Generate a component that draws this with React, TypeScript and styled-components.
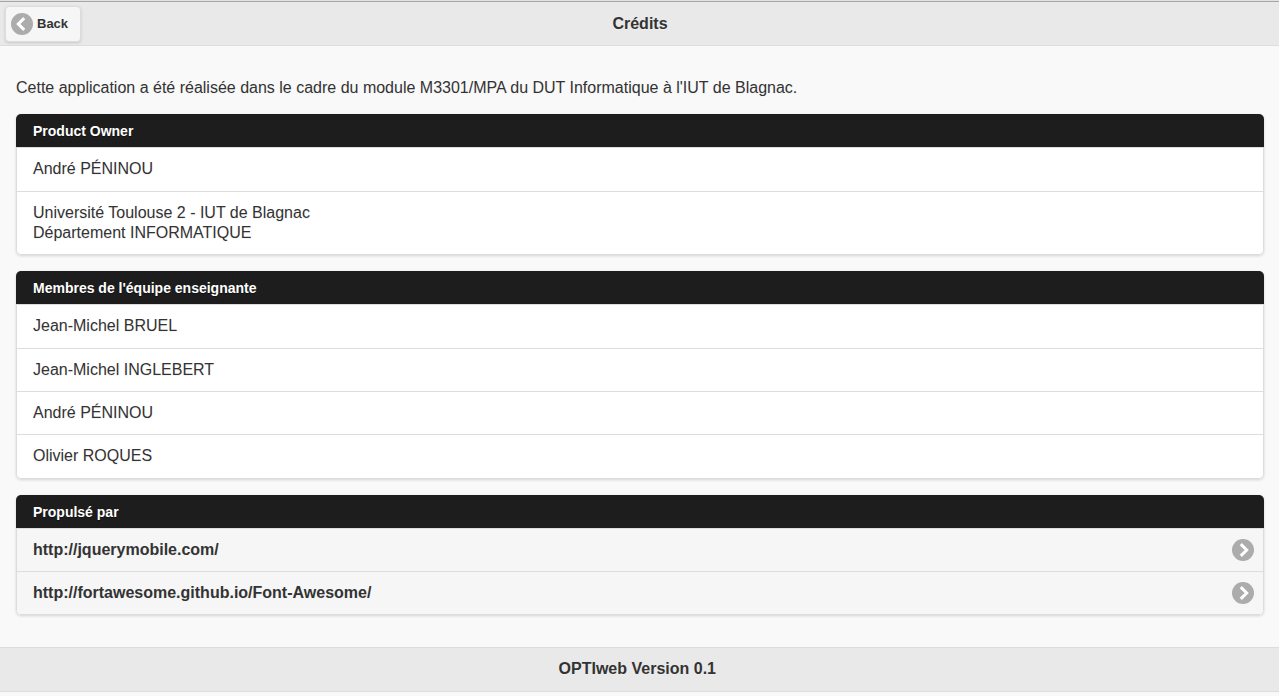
import React from 'react';
import styled, { createGlobalStyle, css } from 'styled-components';

const GlobalStyle = createGlobalStyle`
  *, *::before, *::after { box-sizing: border-box; }
  body {
    margin: 0;
    background: #f9f9f9;
    color: #333;
    font: 16px/20px "Liberation Sans", Arial, Helvetica, sans-serif;
    text-shadow: 0 1px 0 #f3f3f3;
  }
`;

const bar = css`
  background: #e9e9e9;
  border: 1px solid #ddd;
  border-width: 1px 0;
  text-shadow: 0 1px 0 #eee;
`;

const Header = styled.header`
  ${bar}
  display: grid;
  grid-template-columns: 1fr auto 1fr;
  align-items: center;
  height: 46px;
  padding: 2px 4px 0 5px;
  border-top-color: #e2e2e2;
  box-shadow: inset 0 1px 0 #a6a6a6;
`;

const Title = styled.h1`
  margin: 0;
  font-size: 16px;
  line-height: 20px;
`;

const BackButton = styled.button`
  justify-self: start;
  display: flex;
  align-items: center;
  gap: 4px;
  height: 36px;
  padding: 0 12px 0 5px;
  border: 1px solid #ddd;
  border-radius: 4px;
  background: #f6f6f6;
  color: #333;
  font: bold 13px/16px "Liberation Sans", Arial, Helvetica, sans-serif;
  text-shadow: 0 1px 0 #f3f3f3;
  box-shadow: 0 1px 3px rgba(0, 0, 0, 0.15);
  cursor: pointer;
`;

const Main = styled.main`
  padding: 16px 15px 16px 16px;
`;

const Intro = styled.p`
  margin: 16px 0;
`;

const Card = styled.section`
  margin: 16px 0;
  border-radius: 5px;
  box-shadow: 0 1px 3px rgba(0, 0, 0, 0.15);
`;

const CardTitle = styled.h2`
  margin: 0;
  padding: 9px 17px 8px;
  border-radius: 5px 5px 0 0;
  background: #1d1d1d;
  color: #fff;
  font-size: 14px;
  line-height: 16px;
  text-shadow: 0 1px 0 #111;
`;

const List = styled.ul`
  margin: 0;
  padding: 0;
  list-style: none;
  overflow: hidden;
  border: 1px solid #ddd;
  border-top: 0;
  border-radius: 0 0 5px 5px;
  background: #fff;
`;

const Row = styled.li<{ $roomy?: boolean }>`
  padding: 11px 16px ${({ $roomy }) => ($roomy ? 12 : 11)}px;
  border-top: 1px solid #ddd;
`;

const LinkRow = styled.li`
  border-top: 1px solid #ddd;
`;

const RowLink = styled.a`
  display: flex;
  align-items: center;
  justify-content: space-between;
  height: 42px;
  padding: 0 9px 0 16px;
  background: #f6f6f6;
  color: #333;
  font-weight: bold;
  text-decoration: none;
`;

const Footer = styled.footer`
  ${bar}
  padding: 11px 0 12px;
  text-align: center;
  font-weight: bold;
`;

const Disc = styled.svg`
  flex: none;
  width: 22px;
  height: 22px;
`;

const Carat = ({ left = false }: { left?: boolean }) => (
  <Disc viewBox="0 0 22 22" aria-hidden="true">
    <circle cx="11" cy="11" r="11" fill="#000" fillOpacity="0.3" />
    <path
      d={left ? 'M13.2 5.1 7.3 11 13.2 16.9' : 'M8.8 5.1 14.7 11 8.8 16.9'}
      fill="none"
      stroke="#fff"
      strokeWidth="3"
    />
  </Disc>
);

const members = ['Jean-Michel BRUEL', 'Jean-Michel INGLEBERT', 'André PÉNINOU', 'Olivier ROQUES'];
const links = ['http://jquerymobile.com/', 'http://fortawesome.github.io/Font-Awesome/'];

export default function App() {
  return (
    <>
      <GlobalStyle />
      <Header>
        <BackButton type="button">
          <Carat left />
          Back
        </BackButton>
        <Title>Crédits</Title>
      </Header>
      <Main>
        <Intro>
          Cette application a été réalisée dans le cadre du module M3301/MPA du DUT Informatique à
          l'IUT de Blagnac.
        </Intro>
        <Card>
          <CardTitle>Product Owner</CardTitle>
          <List>
            <Row $roomy>André PÉNINOU</Row>
            <Row>
              Université Toulouse 2 - IUT de Blagnac
              <br />
              Département INFORMATIQUE
            </Row>
          </List>
        </Card>
        <Card>
          <CardTitle>Membres de l'équipe enseignante</CardTitle>
          <List>
            {members.map((name, i) => (
              <Row key={name} $roomy={i === 0 || i === members.length - 1}>
                {name}
              </Row>
            ))}
          </List>
        </Card>
        <Card>
          <CardTitle>Propulsé par</CardTitle>
          <List>
            {links.map((url) => (
              <LinkRow key={url}>
                <RowLink href={url}>
                  {url}
                  <Carat />
                </RowLink>
              </LinkRow>
            ))}
          </List>
        </Card>
      </Main>
      <Footer>OPTIweb Version 0.1&nbsp;</Footer>
    </>
  );
}
